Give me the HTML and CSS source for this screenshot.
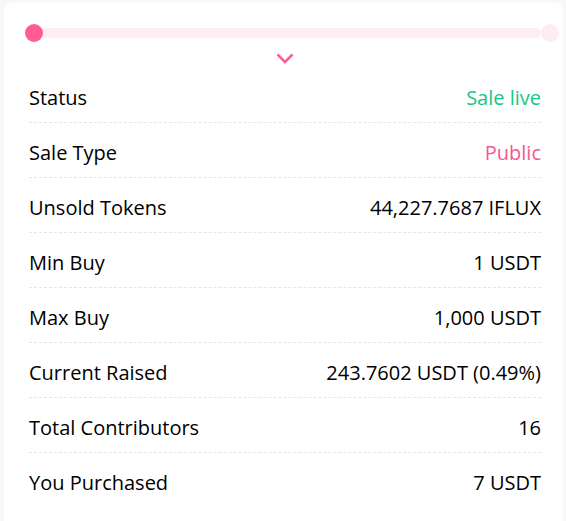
FILE: index.html
```html
<!DOCTYPE html>
<html lang="en">
<head>
  <meta charset="UTF-8">
  <meta name="viewport" content="width=device-width, initial-scale=1.0">
  <title>Sale Info</title>
  <link rel="stylesheet" href="styles.css">
</head>
<body>
  <div class="card">
    <div class="progress">
      <span class="dot dot-active"></span>
      <span class="rail"></span>
      <span class="dot dot-end"></span>
    </div>

    <div class="toggle">
      <svg width="18" height="12" viewBox="0 0 18 12">
        <path d="M1.5 1.5 L9 9 L16.5 1.5" fill="none" stroke="#ff5c93" stroke-width="2.5"/>
      </svg>
    </div>

    <ul class="info">
      <li><span>Status</span><span class="live">Sale live</span></li>
      <li><span>Sale Type</span><span class="public">Public</span></li>
      <li><span>Unsold Tokens</span><span>44,227.7687 IFLUX</span></li>
      <li><span>Min Buy</span><span>1 USDT</span></li>
      <li><span>Max Buy</span><span>1,000 USDT</span></li>
      <li><span>Current Raised</span><span>243.7602 USDT (0.49%)</span></li>
      <li><span>Total Contributors</span><span>16</span></li>
      <li><span>You Purchased</span><span>7 USDT</span></li>
    </ul>
  </div>
</body>
</html>
```

FILE: styles.css
```css
body, html {
  margin: 0;
  background: #f7f8fa;
  color: #000;
  font-family: 'Open Sans', sans-serif;
  font-size: 20px;
}
.card {
  background: #fff;
  margin: 3px 3px 0 4px;
  border-radius: 8px 8px 0 0;
  padding: 21px 4px 20px 21px;
}

.progress {
  display: flex;
  align-items: center;
}
.dot {
  width: 18px;
  height: 18px;
  border-radius: 50%;
  flex: none;
}
.dot-active {
  background: #ff5c93;
}
.dot-end {
  background: #fdedf2;
}
.rail {
  flex: 1;
  height: 10px;
  background: #fdeef2;
  border-radius: 0 5px 5px 0;
}

.toggle {
  height: 15px;
  padding: 11px 14px 0 0;
}
.toggle svg {
  display: block;
  margin: 0 auto;
}

ul.info {
  list-style: none;
  margin: 0;
  padding: 0 18px 0 4px;
}
ul.info li {
  display: flex;
  justify-content: space-between;
  align-items: center;
  box-sizing: border-box;
  height: 55px;
  padding-top: 4px;
  border-bottom: 1px dashed #e6e6e6;
}
ul.info li:last-child {
  border-bottom: none;
}
.live {
  color: #16c784;
}
.public {
  color: #f5588f;
}
```
